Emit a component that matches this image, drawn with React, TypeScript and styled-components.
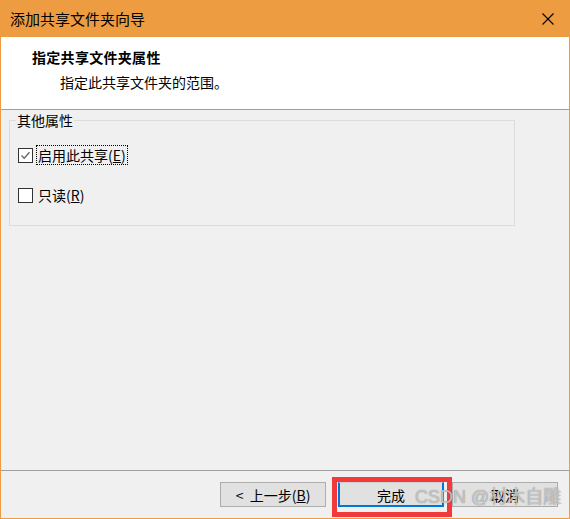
import styled, { createGlobalStyle } from 'styled-components';

const GlobalStyle = createGlobalStyle`
  html, body {
    margin: 0;
    padding: 0;
    background: #ffffff;
  }
  body {
    font-family: "Noto Sans CJK SC", "Liberation Sans", sans-serif;
    font-size: 14px;
    color: #000;
  }
`;

const Window = styled.div`
  position: relative;
  width: 570px;
  height: 519px;
  box-sizing: border-box;
  display: flex;
  flex-direction: column;
  border: 1px solid #ed9c42;
  border-top: 0;
  background: #f0f0f0;
  overflow: hidden;
`;

const TitleBar = styled.div`
  height: 37px;
  flex: none;
  display: flex;
  align-items: center;
  justify-content: space-between;
  padding-left: 9px;
  background: #ed9c42;
  font-size: 15px;
  line-height: 20px;
  user-select: none;
`;

const CloseButton = styled.div`
  width: 46px;
  height: 37px;
  display: flex;
  align-items: center;
  justify-content: center;
  margin-right: -2px;
`;

const Header = styled.div`
  height: 73px;
  flex: none;
  box-sizing: border-box;
  padding: 10px 0 0 31px;
  background: #ffffff;
  border-bottom: 1px solid #a0a0a0;
`;

const HeaderTitle = styled.div`
  font-weight: bold;
  font-size: 14px;
  line-height: 20px;
  letter-spacing: 0.3px;
`;

const HeaderSub = styled.div`
  font-size: 14px;
  line-height: 20px;
  margin-top: 5px;
  padding-left: 28px;
`;

const Body = styled.div`
  flex: 1;
  display: flex;
  flex-direction: column;
`;

const Group = styled.fieldset`
  width: 506px;
  box-sizing: border-box;
  margin: 0 0 0 8px;
  padding: 0 0 20px 8px;
  border: 1px solid #dcdcdc;
`;

const Legend = styled.legend`
  margin-left: -2px;
  padding: 0 1px;
  line-height: 20px;
  font-size: 14px;
`;

const CheckRow = styled.label<{ $first?: boolean }>`
  display: flex;
  align-items: center;
  gap: 3px;
  height: 20px;
  margin-top: ${(p) => (p.$first ? '15px' : '20px')};
  line-height: 20px;
`;

const Box = styled.span`
  width: 13px;
  height: 13px;
  flex: none;
  border: 1px solid #333333;
  background: #ffffff;
  display: flex;
  align-items: center;
  justify-content: center;
`;

const Caption = styled.span<{ $focused?: boolean }>`
  padding: 0 1px;
  border: 1px dotted ${(p) => (p.$focused ? '#000' : 'transparent')};
  line-height: 18px;
`;

const Footer = styled.div`
  height: 48px;
  flex: none;
  box-sizing: border-box;
  display: flex;
  justify-content: flex-end;
  align-items: flex-start;
  gap: 8px;
  padding: 11px 11px 0 0;
  border-top: 1px solid #a0a0a0;
`;

const Button = styled.div<{ $primary?: boolean; $spaced?: boolean }>`
  width: 106px;
  height: 25px;
  box-sizing: border-box;
  display: flex;
  align-items: center;
  justify-content: center;
  background: #e1e1e1;
  border: 1px solid #adadad;
  font-size: 14px;
  white-space: pre;
  margin-right: ${(p) => (p.$spaced ? '4px' : '0')};
  ${(p) =>
    p.$primary &&
    `
    border: 2px solid #0078d7;
    border-top: 1px solid #cfcfcf;
    padding-top: 1px;
  `}
`;

const Highlight = styled.div`
  position: absolute;
  left: 331px;
  top: 477px;
  width: 120px;
  height: 40px;
  box-sizing: border-box;
  border: 5px solid #f23a3c;
  pointer-events: none;
`;

const Watermark = styled.div`
  position: absolute;
  left: 414px;
  top: 485px;
  font-family: "Liberation Sans", "Noto Sans CJK SC", sans-serif;
  font-size: 18px;
  line-height: 24px;
  color: rgba(215, 215, 215, 0.8);
  text-shadow: 0 0 1px rgba(90, 90, 90, 0.8);
  white-space: nowrap;
  pointer-events: none;
`;

function CheckMark() {
  return (
    <svg width="11" height="11" viewBox="0 0 11 11">
      <polyline points="1.5,5.5 4.2,8.3 9.5,2.2" fill="none" stroke="#666" strokeWidth="1.3" />
    </svg>
  );
}

export default function App() {
  return (
    <>
      <GlobalStyle />
      <Window>
        <TitleBar>
          <span>添加共享文件夹向导</span>
          <CloseButton>
            <svg width="12" height="12" viewBox="0 0 12 12">
              <path d="M0.5 0.5 L11.5 11.5 M11.5 0.5 L0.5 11.5" stroke="#000" strokeWidth="1.1" />
            </svg>
          </CloseButton>
        </TitleBar>
        <Header>
          <HeaderTitle>指定共享文件夹属性</HeaderTitle>
          <HeaderSub>指定此共享文件夹的范围。</HeaderSub>
        </Header>
        <Body>
          <Group>
            <Legend>其他属性</Legend>
            <CheckRow $first>
              <Box>
                <CheckMark />
              </Box>
              <Caption $focused>
                启用此共享(<u>E</u>)
              </Caption>
            </CheckRow>
            <CheckRow>
              <Box />
              <Caption>
                只读(<u>R</u>)
              </Caption>
            </CheckRow>
          </Group>
        </Body>
        <Footer>
          <Button $spaced>
            {'<  上一步('}
            <u>B</u>)
          </Button>
          <Button $primary>完成</Button>
          <Button>取消</Button>
        </Footer>
        <Highlight />
        <Watermark>CSDN @村木自雕</Watermark>
      </Window>
    </>
  );
}
